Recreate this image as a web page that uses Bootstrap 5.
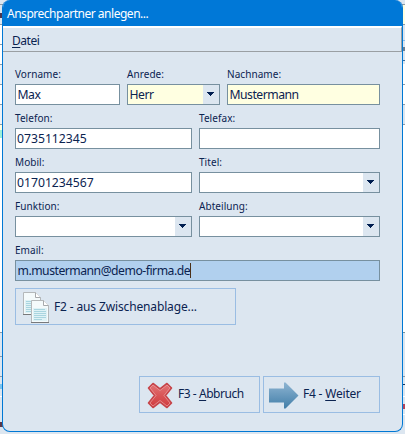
<!DOCTYPE html>
<html lang="de">
<head>
    <meta charset="UTF-8">
    <meta name="viewport" content="width=device-width, initial-scale=1.0">
    <title>Ansprechpartner anlegen</title>
    <link href="https://cdn.jsdelivr.net/npm/bootstrap@5.3.0/dist/css/bootstrap.min.css" rel="stylesheet">
    <style>
        body {
            height: 434px;
            padding: 0 2px 2px;
            overflow: hidden;
            color: #0b2350;
            font: 12px/15px "Noto Sans", "Open Sans", sans-serif;
            /* form behind the dialog, visible as narrow strips */
            background:
                linear-gradient(#dce6f0 4px, #8e9aa4 4px 5px, #dce6f0 5px 13px, #4b3550 13px 18px, #dce6f0 18px 24px, #8e9aa4 24px 25px, #fff 25px 44px, #8e9aa4 44px 45px, #fff 45px 64px, #8e9aa4 64px 65px, #eef3f7 65px 84px, #8e9aa4 84px 85px, #fff 85px 104px, #8e9aa4 104px 105px, #eef3f7 105px 124px, #8e9aa4 124px 125px, #ffffe1 125px 130px, #9df0d8 130px 138px, #fff 138px 332px, #8e9aa4 332px 333px, #dce6f0 333px 356px, #8e9aa4 356px 357px, #dce6f0 357px 376px, #8e9aa4 376px 377px, #dce6f0 377px 384px, #7cc4ee 384px 389px, #dce6f0 389px 396px, #fff 396px 397px, #dce6f0 397px 422px, #5b3848 422px 427px, #dce6f0 427px) 0 0 / 3px 100% no-repeat,
                linear-gradient(#dce6f0 4px, #8e9aa4 4px 5px, #ffffe1 5px 24px, #8e9aa4 24px 25px, #dce6f0 25px 40px, #8abbe8 40px 41px, #dce6f0 41px 47px, #6b7d91 47px 51px, #dce6f0 51px 60px, #3d6f9e 60px 61px, #dce6f0 61px 64px, #fff 64px 84px, #8e9aa4 84px 85px, #fff 85px 104px, #8e9aa4 104px 105px, #dce6f0 105px 124px, #8e9aa4 124px 125px, #fff 125px 332px, #7a949c 332px 333px, #dce6f0 333px 376px, #8e9aa4 376px 377px, #dce6f0 377px 384px, #17365d 384px 385px, #dce6f0 385px 396px, #fff 396px 397px, #dce6f0 397px 404px, #b3475c 404px 409px, #dce6f0 409px 414px, #fff 414px 415px, #dce6f0 415px) 100% 0 / 3px 100% no-repeat,
                #dce6f0;
        }

        .dialog-window {
            width: 401px;
            height: 432px;
            background: #dce6f0;
            border: 1px solid #0078d4;
            border-top: 0;
            border-radius: 8px;
            overflow: hidden;
        }

        .title-bar {
            height: 26px;
            padding: 6px 0 0 4px;
            color: #fff;
            background: #0078d7;
            letter-spacing: -.48px;
        }

        .menu-strip {
            height: 26px;
            padding: 5px 0 0 9px;
            border-top: 2px solid #fff;
            border-right: 1px solid #9a9fa3;
            border-bottom: 1px solid #9a9fa3;
            letter-spacing: -.45px;
        }

        .form-area {
            padding: 16px 22px 0 12px;
        }

        .form-line {
            gap: 7px;
            height: 44px;
        }

        .field-label {
            display: block;
            height: 16px;
            font-size: 10px;
            line-height: 12px;
            letter-spacing: .06px;
        }

        .field-box {
            display: flex;
            height: 21px;
            padding-left: 1.5px;
            background: #fff;
            border: 1px solid #77909f;
            font-size: 12.2px;
            line-height: 19px;
            letter-spacing: -.49px;
        }

        .digits {
            padding-left: 1px;
            letter-spacing: 0;
        }

        .required { background: #ffffe1; }
        .focused { background: #b1d0ee; }
        .w-first { width: 105px; }
        .w-salute { width: 93px; }
        .w-last { width: 153px; }
        .w-left { width: 177px; }
        .w-right { width: 181px; }

        .caret {
            width: 1px;
            height: 15px;
            margin-top: 2px;
            background: #4b3018;
        }

        .drop {
            width: 16px;
            height: 19px;
            margin-left: auto;
            background: #dce6f0;
        }

        .tool-btn {
            height: 37px;
            color: #0b2350;
            border: 1px solid #9abde3;
            background: #dce6f0;
        }

        .btn-clip { width: 221px; padding-left: 7px; letter-spacing: -.14px; }
        .btn-cancel { width: 121px; padding-left: 7px; letter-spacing: -.45px; }
        .btn-next { width: 117px; padding-left: 5px; letter-spacing: -.2px; }
        .bottom-row { gap: 3px; margin-top: 51px; }
        .bottom-row span { margin-bottom: 2px; }

        u { text-underline-offset: 2px; text-decoration-skip-ink: none; }
        svg { display: block; flex: none; }
        .tool-btn svg { margin-top: 1px; }
    </style>
</head>
<body>
    <div class="dialog-window">
        <div class="title-bar">Ansprechpartner anlegen...</div>
        <div class="menu-strip"><u>D</u>atei</div>

        <div class="form-area">
            <div class="form-line d-flex">
                <div class="w-first">
                    <span class="field-label">Vorname:</span>
                    <div class="field-box">Max</div>
                </div>
                <div class="w-salute">
                    <span class="field-label">Anrede:</span>
                    <div class="field-box required">Herr
                        <svg class="drop" viewBox="0 0 16 19"><path d="M4 7h7v1h-1v1H9v1H8v1H7v-1H6V9H5V8H4z" fill="#001e50"/></svg>
                    </div>
                </div>
                <div class="w-last">
                    <span class="field-label">Nachname:</span>
                    <div class="field-box required">Mustermann</div>
                </div>
            </div>
            <div class="form-line d-flex">
                <div class="w-left">
                    <span class="field-label">Telefon:</span>
                    <div class="field-box digits">0735112345</div>
                </div>
                <div class="w-right">
                    <span class="field-label">Telefax:</span>
                    <div class="field-box"></div>
                </div>
            </div>
            <div class="form-line d-flex">
                <div class="w-left">
                    <span class="field-label">Mobil:</span>
                    <div class="field-box digits">01701234567</div>
                </div>
                <div class="w-right">
                    <span class="field-label">Titel:</span>
                    <div class="field-box">
                        <svg class="drop" viewBox="0 0 16 19"><path d="M4 7h7v1h-1v1H9v1H8v1H7v-1H6V9H5V8H4z" fill="#001e50"/></svg>
                    </div>
                </div>
            </div>
            <div class="form-line d-flex">
                <div class="w-left">
                    <span class="field-label">Funktion:</span>
                    <div class="field-box">
                        <svg class="drop" viewBox="0 0 16 19"><path d="M4 7h7v1h-1v1H9v1H8v1H7v-1H6V9H5V8H4z" fill="#001e50"/></svg>
                    </div>
                </div>
                <div class="w-right">
                    <span class="field-label">Abteilung:</span>
                    <div class="field-box">
                        <svg class="drop" viewBox="0 0 16 19"><path d="M4 7h7v1h-1v1H9v1H8v1H7v-1H6V9H5V8H4z" fill="#001e50"/></svg>
                    </div>
                </div>
            </div>
            <div class="form-line">
                <span class="field-label">Email:</span>
                <div class="field-box focused">m.mustermann@demo-firma.de<span class="caret"></span></div>
            </div>

            <div class="tool-btn btn-clip d-flex align-items-center">
                <svg width="27" height="31" viewBox="0 0 27 31">
                    <defs>
                        <g id="sheet">
                            <path d="M.5.5h12l5 5v17H.5z" fill="#f4fafb" stroke="#b4b8ba"/>
                            <path d="M2 8h14v13H2z" fill="#dff2f6"/>
                            <path d="M12.500.5v5h5" fill="#fff" stroke="#a6a9ac"/>
                            <path d="M3 9.500h11M3 11.500h12M3 13.500h12M3 15.500h12M3 17.500h12M3 19.500h8" stroke="#a9d5df"/>
                            <path d="M0 22.500h18" stroke="#77797b"/>
                        </g>
                    </defs>
                    <use href="#sheet"/>
                    <use href="#sheet" x="8" y="8"/>
                </svg>
                <span class="ms-1">F2 - aus Zwischenablage...</span>
            </div>

            <div class="d-flex justify-content-end bottom-row">
                <div class="tool-btn btn-cancel d-flex align-items-center">
                    <svg width="27" height="27" viewBox="0 0 27 27">
                        <defs>
                            <linearGradient id="red" x2="0" y2="1"><stop stop-color="#e27577"/><stop offset=".5" stop-color="#d95557"/><stop offset="1" stop-color="#cf3a3f"/></linearGradient>
                        </defs>
                        <path d="M6 1.500L1.500 6l6 7.500-6 7.500L6 25.500l7-5.500 7 5.500 4.500-4.500-6-7.500 6-7.500L20 1.500 13 7z" fill="url(#red)" stroke="#c64449" stroke-width="1.600" stroke-linejoin="round"/>
                        <path d="M6 3L3 6l6 7.500L3 21l3 3 7-5.500 7 5.500 3-3-6-7.500L23 6l-3-3-7 5.500z" fill="none" stroke="#eda0a2" stroke-width=".7"/>
                    </svg>
                    <span class="ms-1">F3 - <u>A</u>bbruch</span>
                </div>
                <div class="tool-btn btn-next d-flex align-items-center">
                    <svg width="30" height="27" viewBox="0 0 30 27">
                        <defs>
                            <linearGradient id="blue" x2="0" y2="1"><stop stop-color="#8db4d2"/><stop offset="1" stop-color="#427ea8"/></linearGradient>
                        </defs>
                        <path d="M0 6.500h15V.5h1.500L29.500 13.500 16.500 26.500H15V20.500H0z" fill="url(#blue)"/>
                    </svg>
                    <span class="ms-1">F4 - <u>W</u>eiter</span>
                </div>
            </div>
        </div>
    </div>
    <script src="https://cdn.jsdelivr.net/npm/bootstrap@5.3.0/dist/js/bootstrap.bundle.min.js"></script>
</body>
</html>
